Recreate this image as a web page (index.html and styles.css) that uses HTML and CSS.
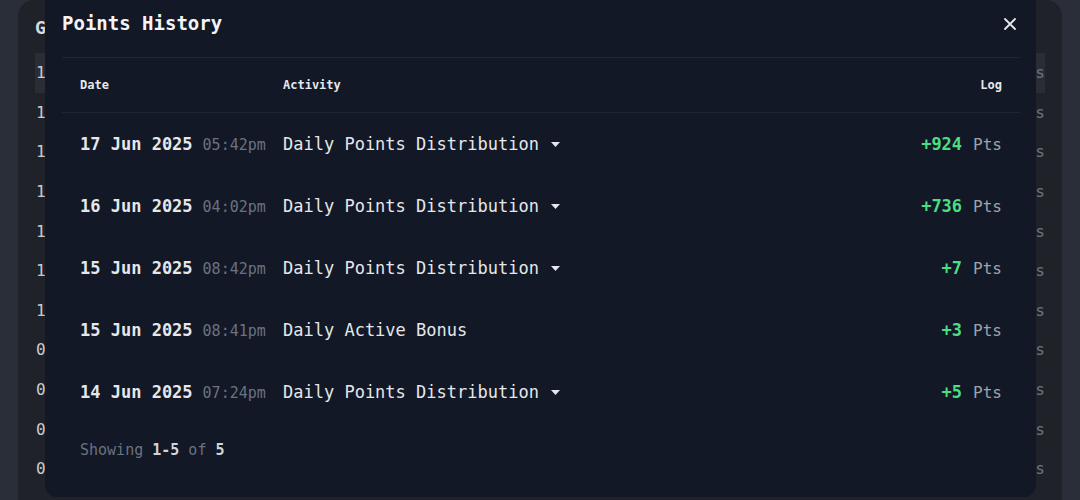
FILE: index.html
```html
<!DOCTYPE html>
<html lang="en">
<head>
    <meta charset="UTF-8">
    <meta name="viewport" content="width=device-width, initial-scale=1.0">
    <title>Points History</title>
    <link rel="stylesheet" href="styles.css">
</head>
<body>
    <div class="page">
        <div class="panel">
            <h3 class="panel-title">Global Leaderboard</h3>
            <div class="panel-row active"><span>1</span><span class="dim">Pts</span></div>
            <div class="panel-row"><span>1</span><span class="dim">Pts</span></div>
            <div class="panel-row"><span>1</span><span class="dim">Pts</span></div>
            <div class="panel-row"><span>1</span><span class="dim">Pts</span></div>
            <div class="panel-row"><span>1</span><span class="dim">Pts</span></div>
            <div class="panel-row"><span>1</span><span class="dim">Pts</span></div>
            <div class="panel-row"><span>1</span><span class="dim">Pts</span></div>
            <div class="panel-row"><span>0</span><span class="dim">Pts</span></div>
            <div class="panel-row"><span>0</span><span class="dim">Pts</span></div>
            <div class="panel-row"><span>0</span><span class="dim">Pts</span></div>
            <div class="panel-row"><span>0</span><span class="dim">Pts</span></div>
        </div>
    </div>

    <div class="modal">
        <div class="modal-head">
            <h2>Points History</h2>
            <button class="close" aria-label="Close">
                <svg width="12" height="12" viewBox="0 0 12 12"><path d="M1 1L11 11M11 1L1 11" stroke="#e5e7eb" stroke-width="1.8" stroke-linecap="round"/></svg>
            </button>
        </div>
        <div class="table">
            <div class="row head">
                <div class="cell-date">Date</div>
                <div>Activity</div>
                <div class="cell-log">Log</div>
            </div>
            <div class="row">
                <div class="cell-date"><b>17 Jun 2025</b><span class="time">05:42pm</span></div>
                <div class="activity">Daily Points Distribution <svg class="caret" width="9" height="5" viewBox="0 0 9 5"><path d="M0 0H9L4.5 5Z" fill="#e5e7eb"/></svg></div>
                <div class="cell-log"><b class="plus">+924</b><span class="pts">Pts</span></div>
            </div>
            <div class="row">
                <div class="cell-date"><b>16 Jun 2025</b><span class="time">04:02pm</span></div>
                <div class="activity">Daily Points Distribution <svg class="caret" width="9" height="5" viewBox="0 0 9 5"><path d="M0 0H9L4.5 5Z" fill="#e5e7eb"/></svg></div>
                <div class="cell-log"><b class="plus">+736</b><span class="pts">Pts</span></div>
            </div>
            <div class="row">
                <div class="cell-date"><b>15 Jun 2025</b><span class="time">08:42pm</span></div>
                <div class="activity">Daily Points Distribution <svg class="caret" width="9" height="5" viewBox="0 0 9 5"><path d="M0 0H9L4.5 5Z" fill="#e5e7eb"/></svg></div>
                <div class="cell-log"><b class="plus">+7</b><span class="pts">Pts</span></div>
            </div>
            <div class="row">
                <div class="cell-date"><b>15 Jun 2025</b><span class="time">08:41pm</span></div>
                <div class="activity">Daily Active Bonus</div>
                <div class="cell-log"><b class="plus">+3</b><span class="pts">Pts</span></div>
            </div>
            <div class="row">
                <div class="cell-date"><b>14 Jun 2025</b><span class="time">07:24pm</span></div>
                <div class="activity">Daily Points Distribution <svg class="caret" width="9" height="5" viewBox="0 0 9 5"><path d="M0 0H9L4.5 5Z" fill="#e5e7eb"/></svg></div>
                <div class="cell-log"><b class="plus">+5</b><span class="pts">Pts</span></div>
            </div>
        </div>
        <p class="showing">Showing <b>1-5</b> of <b>5</b></p>
    </div>
</body>
</html>
```

FILE: styles.css
```css
body {
    margin: 0;
    height: 500px;
    overflow: hidden;
    background-color: #2a2e38;
    font-family: "DejaVu Sans Mono", "Liberation Mono", monospace;
    color: #e5e7eb;
}
.page {
    padding: 0 18px;
}
.panel {
    background-color: #1f2229;
    border-radius: 16px 16px 0 0;
    padding: 12px 17px 40px;
    height: 560px;
}
.panel-title {
    margin: 0 0 9px;
    font-size: 18px;
    line-height: 32px;
    color: #d8dbe0;
}
.panel-row {
    display: flex;
    justify-content: space-between;
    height: 39.6px;
    align-items: center;
    padding-left: 1px;
    font-size: 16px;
    color: #c9ccd2;
}
.panel-row.active {
    background-color: #2a2d36;
}
.dim {
    color: #6b7280;
}
.modal {
    position: absolute;
    left: 45px;
    top: -12px;
    width: 991px;
    height: 509px;
    box-sizing: border-box;
    padding: 12px 16px 0 17px;
    background-color: #121826;
    border-radius: 12px;
}
.modal-head {
    display: flex;
    justify-content: space-between;
    align-items: center;
    height: 46px;
    margin-bottom: 11px;
}
.modal-head h2 {
    margin: 0;
    font-size: 19px;
    font-weight: bold;
    color: #f3f4f6;
}
.close {
    background: none;
    border: none;
    padding: 0;
    margin-right: 4px;
    margin-top: 2px;
    width: 12px;
    height: 12px;
    display: flex;
    cursor: pointer;
}
.table {
    border-top: 1px solid #1e2533;
}
.row {
    display: grid;
    grid-template-columns: 221px 1fr auto;
    align-items: center;
    height: 62px;
    font-size: 17px;
}
.row.head {
    height: 54px;
    font-size: 12px;
    font-weight: 600;
    border-bottom: 1px solid #1e2533;
}
.cell-date {
    padding-left: 18px;
}
.cell-date b {
    font-weight: bold;
    color: #e5e7eb;
}
.time {
    font-size: 15px;
    color: #6b7280;
    margin-left: 10px;
}
.activity {
    display: flex;
    align-items: center;
    gap: 12px;
    color: #e5e7eb;
}
.caret {
    margin-top: 1px;
}
.cell-log {
    padding-right: 18px;
    text-align: right;
}
.plus {
    color: #4ade80;
    font-weight: bold;
}
.pts {
    color: #9ca3af;
    font-size: 16px;
    margin-left: 11px;
}
.showing {
    margin: 18px 0 0 18px;
    font-size: 15px;
    color: #6b7280;
}
.showing b {
    color: #d1d5db;
}
```
